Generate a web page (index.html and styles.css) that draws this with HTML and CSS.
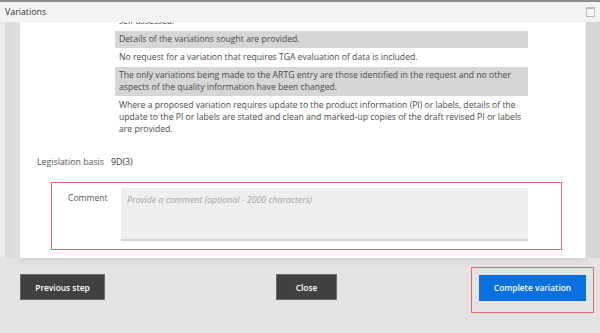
FILE: index.html
```html
<!DOCTYPE html>
<html>
<head>
  <title>Variations</title>
  <link rel="stylesheet" href="styles.css">
</head>
<body>
  <div class="window">
    <div class="titlebar">
      <span class="title">Variations</span>
      <span class="max-icon"></span>
    </div>

    <div class="viewport">
      <div class="gutter"></div>
      <div class="panel">
        <div class="criteria">
          <p class="item">self-assessed.</p>
          <p class="item shaded">Details of the variations sought are provided.</p>
          <p class="item">No request for a variation that requires TGA evaluation of data is included.</p>
          <p class="item shaded">The only variations being made to the ARTG entry are those identified in the request and no other aspects of the quality information have been changed.</p>
          <p class="item">Where a proposed variation requires update to the product information (PI) or labels, details of the update to the PI or labels are stated and clean and marked-up copies of the draft revised PI or labels are provided.</p>
        </div>

        <div class="field-row">
          <span class="label">Legislation basis</span>
          <span class="value">9D(3)</span>
        </div>

        <div class="comment-box">
          <label class="comment-label" for="comment">Comment</label>
          <textarea id="comment" placeholder="Provide a comment (optional - 2000 characters)"></textarea>
        </div>
      </div>
      <div class="scrollbar"></div>
    </div>

    <div class="actions">
      <button class="btn btn-dark">Previous step</button>
      <button class="btn btn-dark btn-close">Close</button>
      <div class="highlight">
        <button class="btn btn-primary">Complete variation</button>
      </div>
    </div>
  </div>
</body>
</html>
```

FILE: styles.css
```css
html, body {
  margin: 0;
  padding: 0;
}

body {
  width: 600px;
  height: 333px;
  overflow: hidden;
  font-family: "Open Sans", "Noto Sans", sans-serif;
  background-color: #e3e3e3;
}

.window {
  height: 331px;
  border-top: 2px solid #8c8c8c;
  display: flex;
  flex-direction: column;
}

.titlebar {
  height: 20px;
  background-color: #f3f3f3;
  display: flex;
  align-items: center;
  justify-content: space-between;
  padding: 0 5px 0 5px;
}

.title {
  font-size: 8.8px;
  color: #333;
}

.max-icon {
  width: 7px;
  height: 7px;
  border: 1px solid #bbb;
  border-top-width: 2px;
  background-color: #f7f7f7;
}

.viewport {
  display: flex;
  height: 236px;
}

.gutter {
  width: 20px;
  background: linear-gradient(to right, #ececec 0, #ececec 5px, #d9d9d9 5px, #e2e2e2 20px);
}

.panel {
  flex: 1;
  background-color: #fff;
  overflow: hidden;
  box-shadow: 0 4px 6px rgba(0, 0, 0, 0.08);
}

.scrollbar {
  width: 14px;
  border-left: 1px solid #e8e8e8;
  background-color: #d6d6d6;
}

.criteria {
  margin: -9px 0 0 95px;
  width: 413px;
}

.item {
  margin: 0 0 1px 0;
  padding: 2px 0 3px 4px;
  font-size: 8.65px;
  line-height: 12px;
  color: #4a4a4a;
}

.item.shaded {
  background-color: #d6d6d6;
}

.field-row {
  display: flex;
  align-items: center;
  margin-top: 18px;
  padding-left: 17px;
  font-size: 8.8px;
  color: #555;
}

.field-row .label {
  width: 74px;
}

.field-row .value {
  color: #333;
}

.comment-box {
  display: flex;
  margin: 14px 0 0 31px;
  width: 511px;
  height: 68px;
  border: 1.5px solid #e36a6a;
  padding: 5px 0 0 0;
  box-sizing: border-box;
}

.comment-label {
  width: 69px;
  padding: 4px 0 0 16px;
  box-sizing: border-box;
  font-size: 8.6px;
  color: #555;
}

.comment-box textarea {
  width: 407px;
  height: 53px;
  resize: none;
  border: none;
  border-bottom: 2px solid #d4d4d4;
  background-color: #efefef;
  padding: 6px 6px;
  box-sizing: border-box;
  font-family: "Open Sans", "Noto Sans", sans-serif;
  font-size: 8.8px;
  font-style: italic;
  color: #555;
}

.comment-box textarea::placeholder {
  color: #a0a0a0;
}

.actions {
  display: flex;
  align-items: flex-start;
  padding: 16px 0 0 20px;
}

.btn {
  height: 26px;
  border: 1px solid #6a6a6a;
  font-family: "Open Sans", "Noto Sans", sans-serif;
  font-size: 8.4px;
  font-weight: 600;
  color: #fff;
  cursor: pointer;
}

.btn-dark {
  background-color: #404040;
}

.btn-dark:first-child {
  width: 85px;
}

.btn-close {
  width: 61px;
  margin-left: 171px;
}

.highlight {
  margin: -7px 6px 0 auto;
  padding: 6px 7px 11px 7px;
  border: 1.5px solid #e36a6a;
}

.btn-primary {
  width: 107px;
  background-color: #0a6fdf;
  border-color: #0a6fdf;
}
```
